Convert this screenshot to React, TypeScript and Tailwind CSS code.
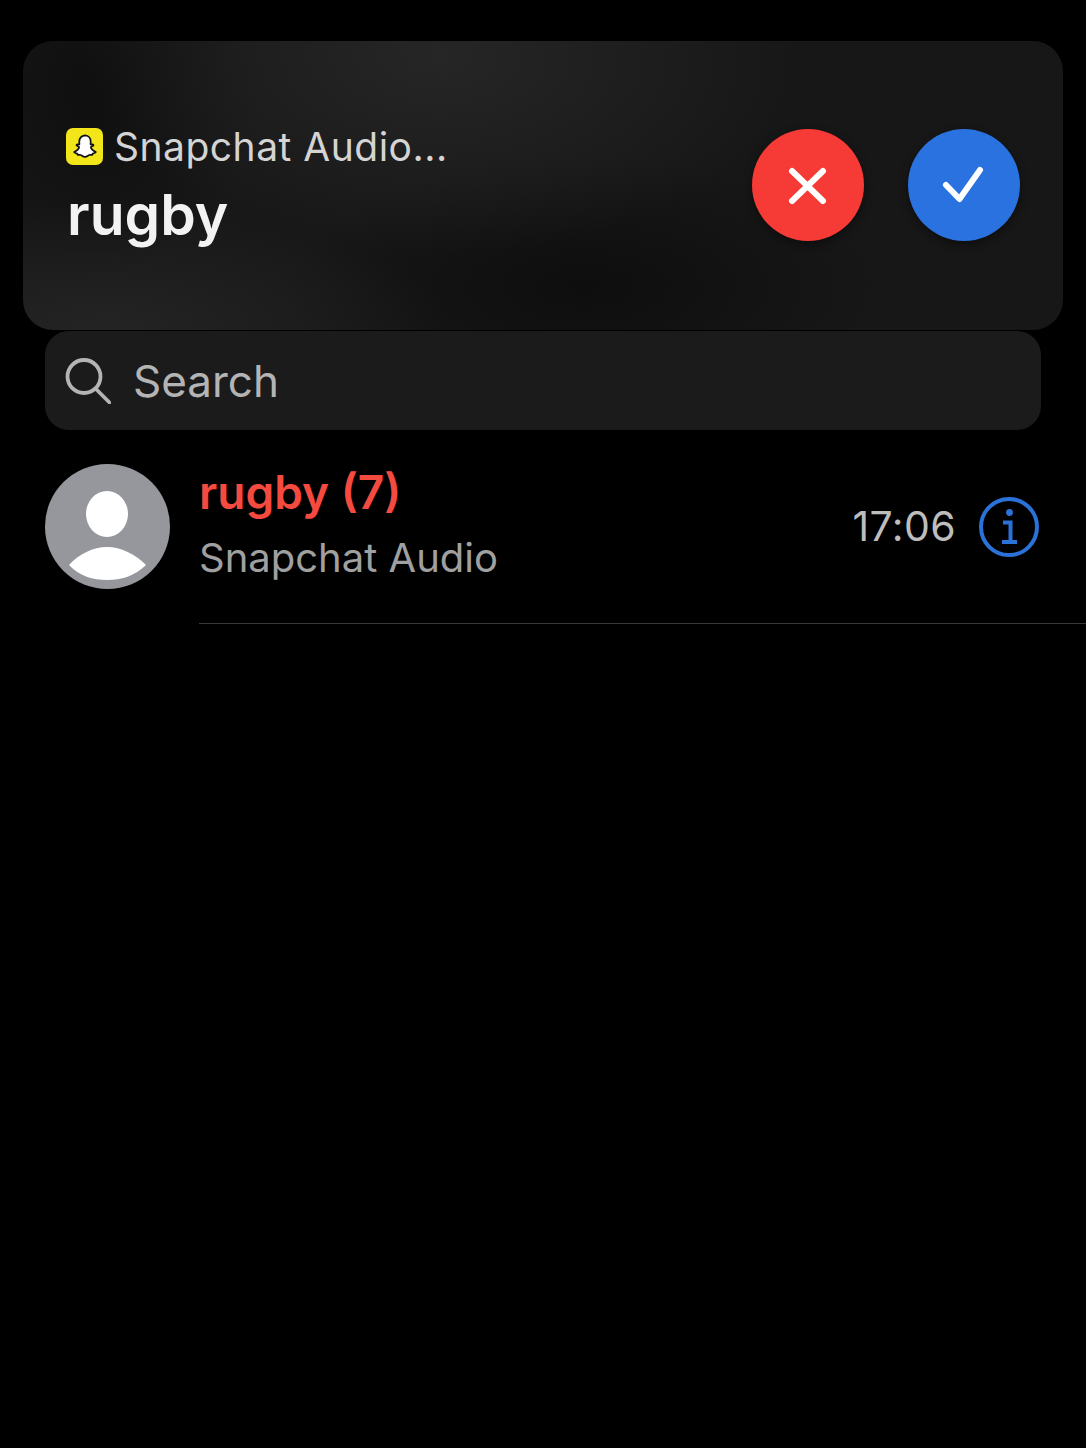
const FONT = "font-['Inter','Liberation_Sans',sans-serif]";

function SnapIcon() {
  return (
    <div className="flex h-[37px] w-[37px] shrink-0 items-center justify-center rounded-[7px] bg-[#f2e51a]">
      <svg viewBox="0 0 32 32" className="h-[31px] w-[31px]">
        <path
          d="M16 4.500c3.900 0 6.400 2.900 6.400 6.500 0 1-.1 2-.1 2.800.6.3 1.300-.1 1.900-.1.7 0 1.100.5 1 1-.2.9-2.300 1.200-2.600 1.900-.3.900 1.900 4 4.500 4.700.5.100.6.600.3.900-.7.700-2.200.8-2.800 1.100-.4.300-.2 1.200-.7 1.400-.9.200-1.900-.2-3 .1-1.300.4-2.200 1.800-4.400 1.800s-3.100-1.400-4.400-1.800c-1.100-.3-2.100.1-3-.1-.5-.2-.3-1.100-.7-1.400-.6-.3-2.100-.4-2.800-1.100-.3-.3-.2-.8.3-.9 2.600-.7 4.800-3.800 4.500-4.700-.3-.7-2.400-1-2.600-1.900-.1-.5.3-1 1-1 .6 0 1.300.4 1.900.1 0-.8-.1-1.800-.1-2.800 0-3.600 2.500-6.500 6.400-6.500z"
          fill="#fff"
          stroke="#111"
          strokeWidth="1.800"
          strokeLinejoin="round"
        />
      </svg>
    </div>
  );
}

function RoundAction({ color, children }: { color: string; children: React.ReactNode }) {
  return (
    <button type="button" className={`flex h-[112px] w-[112px] items-center justify-center rounded-full shadow-[0_3px_10px_rgba(0,0,0,0.45)] ${color}`}>
      <svg viewBox="0 0 112 112" className="h-[112px] w-[112px]" fill="none" stroke="#fff" strokeWidth="6" strokeLinecap="round" strokeLinejoin="round">
        {children}
      </svg>
    </button>
  );
}

export default function App() {
  return (
    <div className={`min-h-[1448px] w-full overflow-hidden bg-black pt-[41px] ${FONT}`}>
      <div className="mx-[23px] flex h-[289px] items-center justify-between rounded-[30px] bg-[#171717] bg-[radial-gradient(ellipse_360px_200px_at_40%_5%,#262626_0%,transparent_100%),radial-gradient(ellipse_340px_130px_at_8%_100%,#242424_0%,transparent_100%),radial-gradient(ellipse_300px_130px_at_54%_85%,#0e0e0e_0%,transparent_100%),radial-gradient(ellipse_160px_190px_at_7%_18%,#0f0f0f_0%,transparent_100%)] pb-[2px] pl-[43px] pr-[43px]">
        <div className="mt-[2px] flex flex-col">
          <div className="flex h-[44px] items-center gap-[11px]">
            <SnapIcon />
            <span className="text-[39px] leading-[44px] tracking-[0.5px] text-[#d4d4d4]">Snapchat Audio...</span>
          </div>
          <div className="mt-[14px] pl-[1px] text-[57px] font-semibold leading-[64px] text-[#f2f2f2]">rugby</div>
        </div>
        <div className="flex items-center gap-[44px]">
          <RoundAction color="bg-[#f63a35]">
            <path d="M40 42L71 72M71 42L40 72" />
          </RoundAction>
          <RoundAction color="bg-[#2a72e0]">
            <path d="M38 56L51.500 70L72 41" />
          </RoundAction>
        </div>
      </div>

      <div className="mx-[45px] mt-px flex h-[99px] items-center rounded-[24px] bg-[#1b1b1b] pl-[20px]">
        <svg viewBox="0 0 46 46" className="h-[46px] w-[46px] shrink-0" fill="none" stroke="#b4b4b4" strokeWidth="3.800" strokeLinecap="round">
          <circle cx="19" cy="18.500" r="16.500" />
          <path d="M31 31L44.500 44.500" />
        </svg>
        <span className="ml-[22px] text-[44px] leading-none text-[#b4b4b4]">Search</span>
      </div>

      <div className="relative ml-[45px] mt-[34px] flex h-[159px] items-start">
        <div className="relative h-[125px] w-[125px] shrink-0 overflow-hidden rounded-full bg-[#95979c]">
          <svg viewBox="0 0 125 125" className="h-[125px] w-[125px]">
            <ellipse cx="62" cy="50" rx="21" ry="23" fill="#fff" />
            <path d="M24 101C34 90 48 83 62 83C76 83 90 90 101 101C90 112 76 116 62 116C48 116 34 112 24 101Z" fill="#fff" />
          </svg>
        </div>
        <div className="ml-[29px] flex flex-col">
          <div className="text-[46px] font-semibold leading-[56px] text-[#f44a3f]">rugby (7)</div>
          <div className="mt-[15px] text-[40px] leading-[46px] text-[#a0a0a0]">Snapchat Audio</div>
        </div>
        <div className="ml-auto mr-[47px] flex h-[125px] items-center">
          <span className="text-[41px] leading-none tracking-[0.4px] text-[#bdbdbd]">17:06</span>
          <svg viewBox="0 0 60 60" className="ml-[23px] h-[60px] w-[60px]" fill="none">
            <circle cx="30" cy="30" r="28" stroke="#2a72d8" strokeWidth="4" />
            <circle cx="30.500" cy="15.500" r="3.400" fill="#2a72d8" />
            <path d="M24 25.500H31.500V44M23 45H38" stroke="#2a72d8" strokeWidth="4" />
          </svg>
        </div>
      </div>
      <div className="ml-[199px] h-px bg-[#3a3a3a]" />
    </div>
  );
}
